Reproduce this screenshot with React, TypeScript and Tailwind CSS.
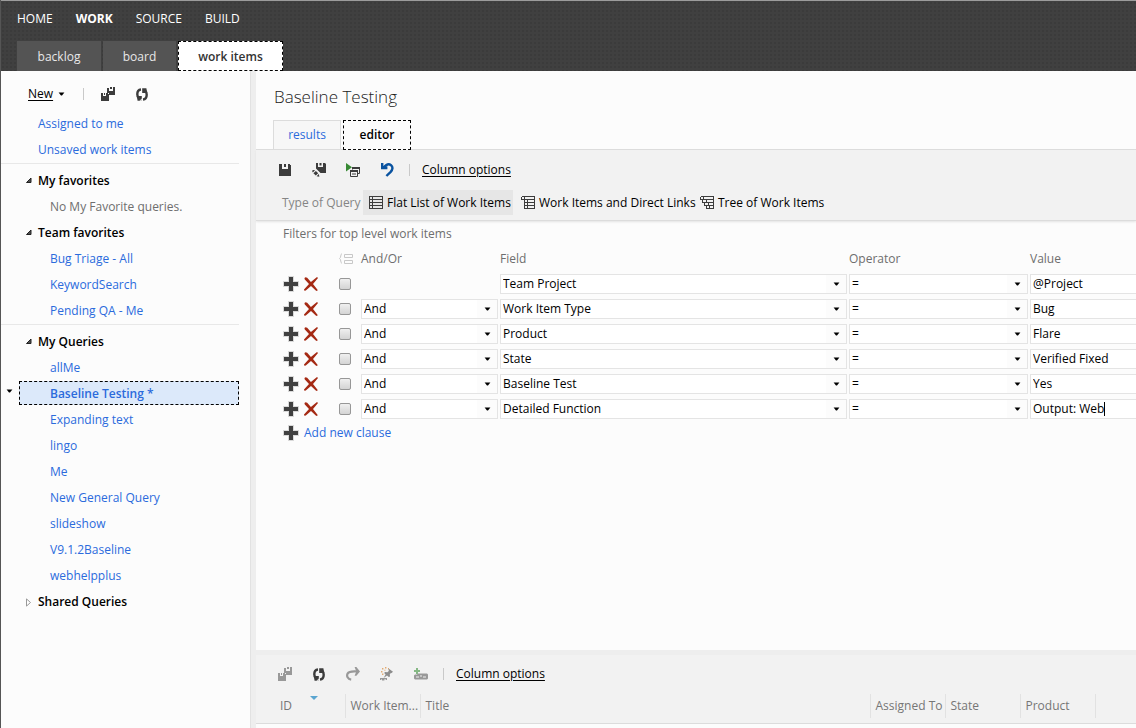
import React from "react";

const clauses = [
  { logic: "", field: "Team Project", value: "@Project" },
  { logic: "And", field: "Work Item Type", value: "Bug" },
  { logic: "And", field: "Product", value: "Flare" },
  { logic: "And", field: "State", value: "Verified Fixed" },
  { logic: "And", field: "Baseline Test", value: "Yes" },
  { logic: "And", field: "Detailed Function", value: "Output: Web", editing: true },
];

const myQueries = [
  "allMe",
  "Baseline Testing *",
  "Expanding text",
  "lingo",
  "Me",
  "New General Query",
  "slideshow",
  "V9.1.2Baseline",
  "webhelpplus",
];

function Caret() {
  return (
    <svg width="7" height="4" viewBox="0 0 7 4" fill="#000" className="shrink-0" aria-hidden="true">
      <path d="M0.600 0.500h5.800L4 3.500H3z" />
    </svg>
  );
}

function SaveAllIcon({ color }: { color: string }) {
  return (
    <svg width="14" height="14" viewBox="0 0 14 14" fill={color} shapeRendering="crispEdges" aria-hidden="true">
      <path d="M6 1h2v3h1v0h3V0h2v8H8V6H6z M9 0h2v2H9z" />
      <path d="M0 6h2v3h3V6h1l2 2v6H0z M3 6h1v2H3z" />
    </svg>
  );
}

function RefreshIcon() {
  return (
    <svg width="12" height="13" viewBox="0 0 12 13" fill="none" stroke="#3c3c3c" strokeWidth="2.4" aria-hidden="true">
      <path d="M5 1.500C2.600 1.700 1.300 4 1.300 6.300c0 1.700.6 3 1.700 4" />
      <path d="M7 11.500c2.400-.2 3.700-2.500 3.700-4.800 0-1.700-.6-3-1.700-4" />
      <path d="M.8 8h5v4.700H1.600z" fill="#3c3c3c" stroke="none" />
      <path d="M11.200 5h-5V.300h4.200z" fill="#3c3c3c" stroke="none" />
      <path d="M3.600 12.700L5.800 10.400V12.700z" fill="#fcfcfc" stroke="none" />
    </svg>
  );
}

function SaveIcon() {
  return (
    <svg width="12" height="12" viewBox="0 0 12 12" fill="#3c3c3c" shapeRendering="crispEdges" aria-hidden="true">
      <path d="M0 0h3v5h6V0h2v1h1v11H0z M5 0h2v3H5z" />
    </svg>
  );
}

function SaveAsIcon() {
  return (
    <svg width="14" height="14" viewBox="0 0 14 14" fill="#3c3c3c" aria-hidden="true">
      <path d="M4 0h2v4h5V0h2l1 1v9H8.500L4 5.600z M7.500 0h2v2.600h-2z" />
      <path d="M0 7.800l1.400-.8 1.700.3L.8 9.600zM1.400 10.300L3.900 7.900 6.200 10.300 3.800 12.600zM4.600 13.200L6.800 11l.6 2.800z" />
    </svg>
  );
}

function RunIcon() {
  return (
    <svg width="14" height="14" viewBox="0 0 14 14" fill="none" aria-hidden="true">
      <path d="M0 0l6 4.2L0 8.4z" fill="#388a34" />
      <path d="M6.500 6.500v-2h7v6h-2M4.500 7.500h7v6h-7z" stroke="#3c3c3c" />
      <path d="M6 4h8v2H6zM4 7h8v2H4zM6 10.500h4v1H6z" fill="#3c3c3c" />
    </svg>
  );
}

function UndoIcon() {
  return (
    <svg width="13" height="14" viewBox="0 0 13 14" fill="none" aria-hidden="true">
      <path d="M2.500 4.600C5 1.600 8 .6 10 2.200c2.200 1.900 1.700 4.500-.3 6.600L5.400 13" stroke="#0a53a0" strokeWidth="2.4" />
      <path d="M0 0h2.400v3.300h4v2.900H0z" fill="#0a53a0" />
    </svg>
  );
}

function RedoIcon() {
  return (
    <svg width="14" height="14" viewBox="0 0 14 14" fill="none" aria-hidden="true">
      <path d="M5.200 12.600C1.600 12 .4 8.800 1.600 6.600 2.800 4.300 6 4 11 4.400" stroke="#999" strokeWidth="2.2" />
      <path d="M8.600 0H10.400L14 4.400 10.400 8.800H8.600L10.300 4.400z" fill="#999" />
    </svg>
  );
}

function PinNewIcon() {
  return (
    <svg width="14" height="14" viewBox="0 0 14 14" aria-hidden="true">
      <path
        d="M2 1h1.400v1.400H2zM5 0h1.400v1.400H5zM8 1h1v1.400H8zM1 4h1.400v1.400H1zM2 6.600h1.400V8H2zM4.400 2.800h1v1h-1z"
        fill="#e2aa70"
      />
      <path d="M8.600 1.600L13 4.800 11.600 6l-1 .2-.8 1 .2 2.200-1.200.6-1.800-1.600L3.600 11l2-3.600L4.200 6l.8-1 2.400.2L8.800 4z" fill="#8c8c8c" />
      <path d="M.6 13v-1.400h2v1.200h1.200v-1.200h2.600V13" fill="none" stroke="#999" strokeWidth="1.200" />
    </svg>
  );
}

function AddLinkIcon() {
  return (
    <svg width="14" height="12" viewBox="0 0 14 12" aria-hidden="true">
      <path d="M2 0h2v2h2v2H4v2H2V4H0V2h2z" fill="#85b884" />
      <path d="M0 7.500l1-1h2l1-1h9l1 1v4l-1 1H1l-1-1z" fill="#999" />
      <path d="M2 8.500h3v1H2zM6.500 7h1v2h-1zM9 8.500h3v1H9z" fill="#f2f2f2" />
    </svg>
  );
}

function FlatListIcon() {
  return (
    <svg width="14" height="14" viewBox="0 0 14 14" fill="none" stroke="#3c3c3c" shapeRendering="crispEdges" className="shrink-0" aria-hidden="true">
      <path d="M.5 .5h13v12H.5zM.5 3.500h13M.5 6.500h13M.5 9.500h13M3.500 .5v12" />
    </svg>
  );
}

function DirectLinksIcon() {
  return (
    <svg width="14" height="14" viewBox="0 0 14 14" fill="none" stroke="#3c3c3c" shapeRendering="crispEdges" className="shrink-0" aria-hidden="true">
      <path d="M.5 .5h13v12H3.500V3.500M.5 .5v3h13M3.500 6.500h10M3.500 9.500h10M6.500 3.500v9M3.500 .5v3" />
    </svg>
  );
}

function TreeIcon() {
  return (
    <svg width="14" height="14" viewBox="0 0 14 14" fill="none" stroke="#3c3c3c" shapeRendering="crispEdges" className="shrink-0" aria-hidden="true">
      <path d="M.5 .5h13v12H6.500v-3M.5 .5v3h13M2.500 3.500v3h11M4.500 6.500v3h9M3.500 .5v3M6.500 3.500v3M8.500 6.500v3M9.500 9.500v3" />
    </svg>
  );
}

function GroupIcon() {
  return (
    <svg width="14" height="12" viewBox="0 0 14 12" fill="none" stroke="#c8c8c8" aria-hidden="true">
      <path d="M3 .5C1.500 .5 2 5.500 .5 5.500 2 5.500 1.500 10.500 3 10.500M5.500 1.500h8v3h-8zM5.500 7.500h8v3h-8z" />
    </svg>
  );
}

function PlusIcon() {
  return (
    <svg width="16" height="16" viewBox="0 0 16 16" shapeRendering="crispEdges" aria-hidden="true">
      <path d="M5 0h6v5h5v6h-5v5H5v-5H0V5h5z" fill="#d9d9d9" />
      <path d="M6 1h4v5h5v4h-5v5H6v-5H1V6h5z" fill="#404040" />
    </svg>
  );
}

function DeleteIcon() {
  return (
    <svg width="14" height="14" viewBox="0 0 14 14" fill="#a52a14" aria-hidden="true">
      <path d="M1.600 .3C.6.500.2 1.600.8 2.400L5 7 0 12.400c-.1 1 .9 1.700 1.800 1.200L7 8.900 12.300 14 13.900 13.300 9 7 14 .9 13 .1 6.900 4.900 3.200.8z" />
    </svg>
  );
}

function Separator() {
  return <span className="h-3 w-px bg-[#c9c9c9]" />;
}

function SectionHeader({ title, open = true }: { title: string; open?: boolean }) {
  return (
    <button type="button" className="flex h-[26px] w-full items-center pl-6 text-left font-semibold text-black">
      {open ? (
        <svg width="7" height="8" viewBox="0 0 7 8" className="mr-1.5 shrink-0" aria-hidden="true">
          <path d="M6 1v4.500H1.500z" fill="#505050" stroke="#222" />
        </svg>
      ) : (
        <svg width="7" height="9" viewBox="0 0 7 9" className="mr-1.5 shrink-0" aria-hidden="true">
          <path d="M1.500 .9v7.200L5.500 4.500z" fill="#fff" stroke="#999" />
        </svg>
      )}
      {title}
    </button>
  );
}

function QueryLink({ text }: { text: string }) {
  return (
    <a href="#" className="flex h-[26px] items-center pl-[49px] text-[#2b6bdc]">
      {text}
    </a>
  );
}

function Combo({ value, label }: { value: string; label: string }) {
  return (
    <div className="grid h-5 grid-cols-1 items-center border border-[#e4e4e4] bg-white">
      <select
        aria-label={label}
        defaultValue={value}
        className="col-start-1 row-start-1 h-[18px] w-full appearance-none bg-transparent pl-0.5 text-black outline-none"
      >
        <option>{value}</option>
      </select>
      <span className="pointer-events-none col-start-1 row-start-1 flex h-[18px] w-5 items-center justify-center justify-self-end bg-[#fcfcfc]">
        <Caret />
      </span>
    </div>
  );
}

function IconButton({ label, children, className = "" }: { label: string; children: React.ReactNode; className?: string }) {
  return (
    <button type="button" aria-label={label} className={"flex h-4 w-3.5 shrink-0 items-center justify-center " + className}>
      {children}
    </button>
  );
}

function Sidebar() {
  return (
    <aside className="w-[249px] shrink-0 pr-[11px]">
      <div className="flex h-10 items-center pt-1.5 pl-[27px]">
        <button type="button" className="flex items-center gap-[5px] text-black">
          <span className="underline underline-offset-2">New</span>
          <Caret />
        </button>
        <span className="mr-[17px] ml-[18px] flex">
          <Separator />
        </span>
        <IconButton label="Save all">
          <SaveAllIcon color="#3c3c3c" />
        </IconButton>
        <IconButton label="Refresh" className="ml-5">
          <RefreshIcon />
        </IconButton>
      </div>
      <nav aria-label="Queries">
        <a href="#" className="flex h-[26px] items-center pl-[37px] text-[#2b6bdc]">Assigned to me</a>
        <a href="#" className="flex h-[26px] items-center pl-[37px] text-[#2b6bdc]">Unsaved work items</a>
        <div className="mb-1 border-t border-[#e8e8e8]" />
        <SectionHeader title="My favorites" />
        <p className="flex h-[26px] items-center pl-[49px] text-[#6e6e6e]">No My Favorite queries.</p>
        <SectionHeader title="Team favorites" />
        <QueryLink text="Bug Triage - All" />
        <QueryLink text="KeywordSearch" />
        <QueryLink text="Pending QA - Me" />
        <div className="mb-1 border-t border-[#e8e8e8]" />
        <SectionHeader title="My Queries" />
        {myQueries.map((q) =>
          q.endsWith("*") ? (
            <div key={q} className="flex h-[26px] items-start pl-[5px]">
              <button type="button" aria-label="Query menu" className="mr-1.5 pt-2">
                <Caret />
              </button>
              <a
                href="#"
                className="flex h-6 flex-1 items-center border border-dashed border-black bg-[#dce9fa] pt-px pl-[30px] font-semibold text-[#2b6bdc]"
              >
                {q}
              </a>
            </div>
          ) : (
            <QueryLink key={q} text={q} />
          )
        )}
        <SectionHeader title="Shared Queries" open={false} />
      </nav>
    </aside>
  );
}

function FilterTable() {
  return (
    <table className="w-full table-fixed border-collapse">
      <colgroup>
        <col className="w-[21px]" />
        <col className="w-[35px]" />
        <col className="w-[22px]" />
        <col className="w-[139px]" />
        <col className="w-[349px]" />
        <col className="w-[181px]" />
        <col />
      </colgroup>
      <thead>
        <tr className="h-6 text-left text-[#6e6e6e]">
          <th />
          <th />
          <th className="p-0">
            <GroupIcon />
          </th>
          <th className="p-0 font-normal">And/Or</th>
          <th className="p-0 font-normal">Field</th>
          <th className="p-0 font-normal">Operator</th>
          <th className="p-0 font-normal">Value</th>
        </tr>
      </thead>
      <tbody>
        {clauses.map((c) => (
          <tr key={c.field} className="h-[25px]">
            <td className="p-0">
              <button type="button" aria-label="Insert clause" className="flex">
                <PlusIcon />
              </button>
            </td>
            <td className="p-0">
              <button type="button" aria-label="Remove clause" className="flex">
                <DeleteIcon />
              </button>
            </td>
            <td className="p-0">
              <input
                type="checkbox"
                aria-label={"Group " + c.field}
                className="block h-3 w-3 appearance-none rounded-[2px] border border-[#979797] bg-linear-to-b from-[#f0f0f0] to-[#d4d4d4]"
              />
            </td>
            <td className="p-0 pr-0.5">{c.logic && <Combo value={c.logic} label="And/Or" />}</td>
            <td className="p-0 pr-0.5">
              <Combo value={c.field} label="Field" />
            </td>
            <td className="p-0 pr-0.5">
              <Combo value="=" label="Operator" />
            </td>
            <td className="p-0">
              <div className="flex h-5 items-center border border-r-0 border-[#e4e4e4] bg-white pl-0.5">
                <input
                  type="text"
                  aria-label="Value"
                  defaultValue={c.value}
                  className={c.editing ? "field-sizing-content text-black outline-none" : "w-full text-black outline-none"}
                />
                {c.editing && <span className="h-3.5 w-px bg-black" />}
              </div>
            </td>
          </tr>
        ))}
      </tbody>
    </table>
  );
}

function ResultsHead() {
  const cell = "border-r border-[#e2e2e2] p-0 pl-[5px] font-normal";
  return (
    <table className="w-full table-fixed border-collapse">
      <colgroup>
        <col className="w-[89px]" />
        <col className="w-[75px]" />
        <col />
        <col className="w-[75px]" />
        <col className="w-[75px]" />
        <col className="w-[75px]" />
        <col className="w-[41px]" />
      </colgroup>
      <thead>
        <tr className="h-6 text-left text-[#767676]">
          <th className="border-r border-[#e2e2e2] p-0 pl-6 font-normal">
            <span className="flex items-center">
              ID
              <svg width="8" height="4" viewBox="0 0 8 4" className="mb-4 ml-[18px]" aria-hidden="true">
                <path d="M0 0h8L4 4z" fill="#5aa5d0" />
              </svg>
            </span>
          </th>
          <th className={cell}>Work Item...</th>
          <th className={cell}>Title</th>
          <th className={cell}>Assigned To</th>
          <th className={cell}>State</th>
          <th className={cell}>Product</th>
          <th />
        </tr>
      </thead>
    </table>
  );
}

export default function App() {
  return (
    <div className="flex min-h-screen flex-col overflow-hidden border-l border-[#555] bg-[#fcfcfc] font-['Open_Sans','Noto_Sans',sans-serif] text-xs leading-4 whitespace-nowrap">
      <header className="border-t border-[#9c9c9c] bg-[#404040] bg-[radial-gradient(#3b3b3b_1px,transparent_1px)] bg-size-[4px_4px]">
        <nav aria-label="Main" className="flex h-10 items-center gap-[23px] pb-1 pl-4 text-white">
          <a href="#">HOME</a>
          <a href="#" className="font-bold">WORK</a>
          <a href="#">SOURCE</a>
          <a href="#">BUILD</a>
        </nav>
        <nav aria-label="Work" className="flex h-[30px] gap-0.5 pl-4">
          <a href="#" className="flex w-[84px] items-center justify-center bg-[#545454] pt-0.5 font-medium text-[#e8e8e8]">backlog</a>
          <a href="#" className="flex w-[73px] items-center justify-center bg-[#545454] pt-0.5 font-medium text-[#e8e8e8]">board</a>
          <a href="#" className="flex w-[105px] items-center justify-center border border-dashed border-black bg-white pt-0.5 font-semibold text-[#333]">work items</a>
        </nav>
      </header>

      <div className="flex flex-1">
        <Sidebar />
        <div className="w-1.5 shrink-0 border-l border-[#e2e2e2] bg-[#eee]" />
        <main className="flex min-w-0 flex-1 flex-col">
          <h1 className="pt-3.5 pb-[11px] pl-[18px] text-[17px] leading-6 font-light text-[#222]">Baseline Testing</h1>
          <div className="flex h-[30px] gap-0.5 border-b border-[#dcdcdc] pl-[17px]">
            <button type="button" className="w-[68px] border border-b-0 border-[#dcdcdc] bg-[#f7f7f7] text-[#2b6bdc]">results</button>
            <button type="button" className="-mb-px w-[68px] border border-dashed border-black bg-[#fcfcfc] font-semibold text-black">editor</button>
          </div>

          <div className="border-b border-[#dcdcdc] bg-[#f2f2f2] shadow-[0_1px_2px_#e4e4e4]">
            <div className="flex h-10 items-center pl-[22px]">
              <IconButton label="Save query">
                <SaveIcon />
              </IconButton>
              <IconButton label="Save as" className="ml-5">
                <SaveAsIcon />
              </IconButton>
              <IconButton label="Run query" className="ml-5">
                <RunIcon />
              </IconButton>
              <IconButton label="Undo" className="ml-5">
                <UndoIcon />
              </IconButton>
              <span className="mx-3 flex pl-[3px]">
                <Separator />
              </span>
              <a href="#" className="text-black underline underline-offset-2">Column options</a>
            </div>
            <div className="flex h-[30px] items-start pl-[26px] text-black">
              <span className="mr-1.5 flex h-[25px] w-[75px] shrink-0 items-center text-[#858585]">Type of Query</span>
              <button type="button" className="flex h-[25px] w-[150px] shrink-0 items-center gap-1 bg-[#e6e6e6] pl-1.5">
                <FlatListIcon />
                Flat List of Work Items
              </button>
              <button type="button" className="ml-2 flex h-[25px] w-[171px] shrink-0 items-center gap-1">
                <DirectLinksIcon />
                Work Items and Direct Links
              </button>
              <button type="button" className="ml-2 flex h-[25px] shrink-0 items-center gap-1">
                <TreeIcon />
                Tree of Work Items
              </button>
            </div>
          </div>

          <section className="flex-1 pl-[27px]">
            <p className="flex h-[26px] items-center text-[#6e6e6e]">Filters for top level work items</p>
            <FilterTable />
            <button type="button" className="flex h-6 items-center gap-[5px] text-[#2b6bdc]">
              <PlusIcon />
              Add new clause
            </button>
          </section>

          <section aria-label="Results" className="border-t-[5px] border-[#eee]">
            <div className="border-b border-[#dcdcdc] bg-[#f2f2f2]">
              <div className="flex h-9 items-center pt-0.5 pl-[22px]">
                <IconButton label="Save all results">
                  <SaveAllIcon color="#999" />
                </IconButton>
                <IconButton label="Refresh results" className="ml-5">
                  <RefreshIcon />
                </IconButton>
                <IconButton label="Redo" className="ml-5">
                  <RedoIcon />
                </IconButton>
                <IconButton label="New linked item" className="ml-5">
                  <PinNewIcon />
                </IconButton>
                <IconButton label="Add link" className="ml-5">
                  <AddLinkIcon />
                </IconButton>
                <span className="mx-3 flex pl-[3px]">
                  <Separator />
                </span>
                <a href="#" className="text-black underline underline-offset-2">Column options</a>
              </div>
              <div className="h-8 pt-[3px]">
                <ResultsHead />
              </div>
            </div>
            <div className="h-1 bg-[#fcfcfc]" />
          </section>
        </main>
      </div>
    </div>
  );
}
